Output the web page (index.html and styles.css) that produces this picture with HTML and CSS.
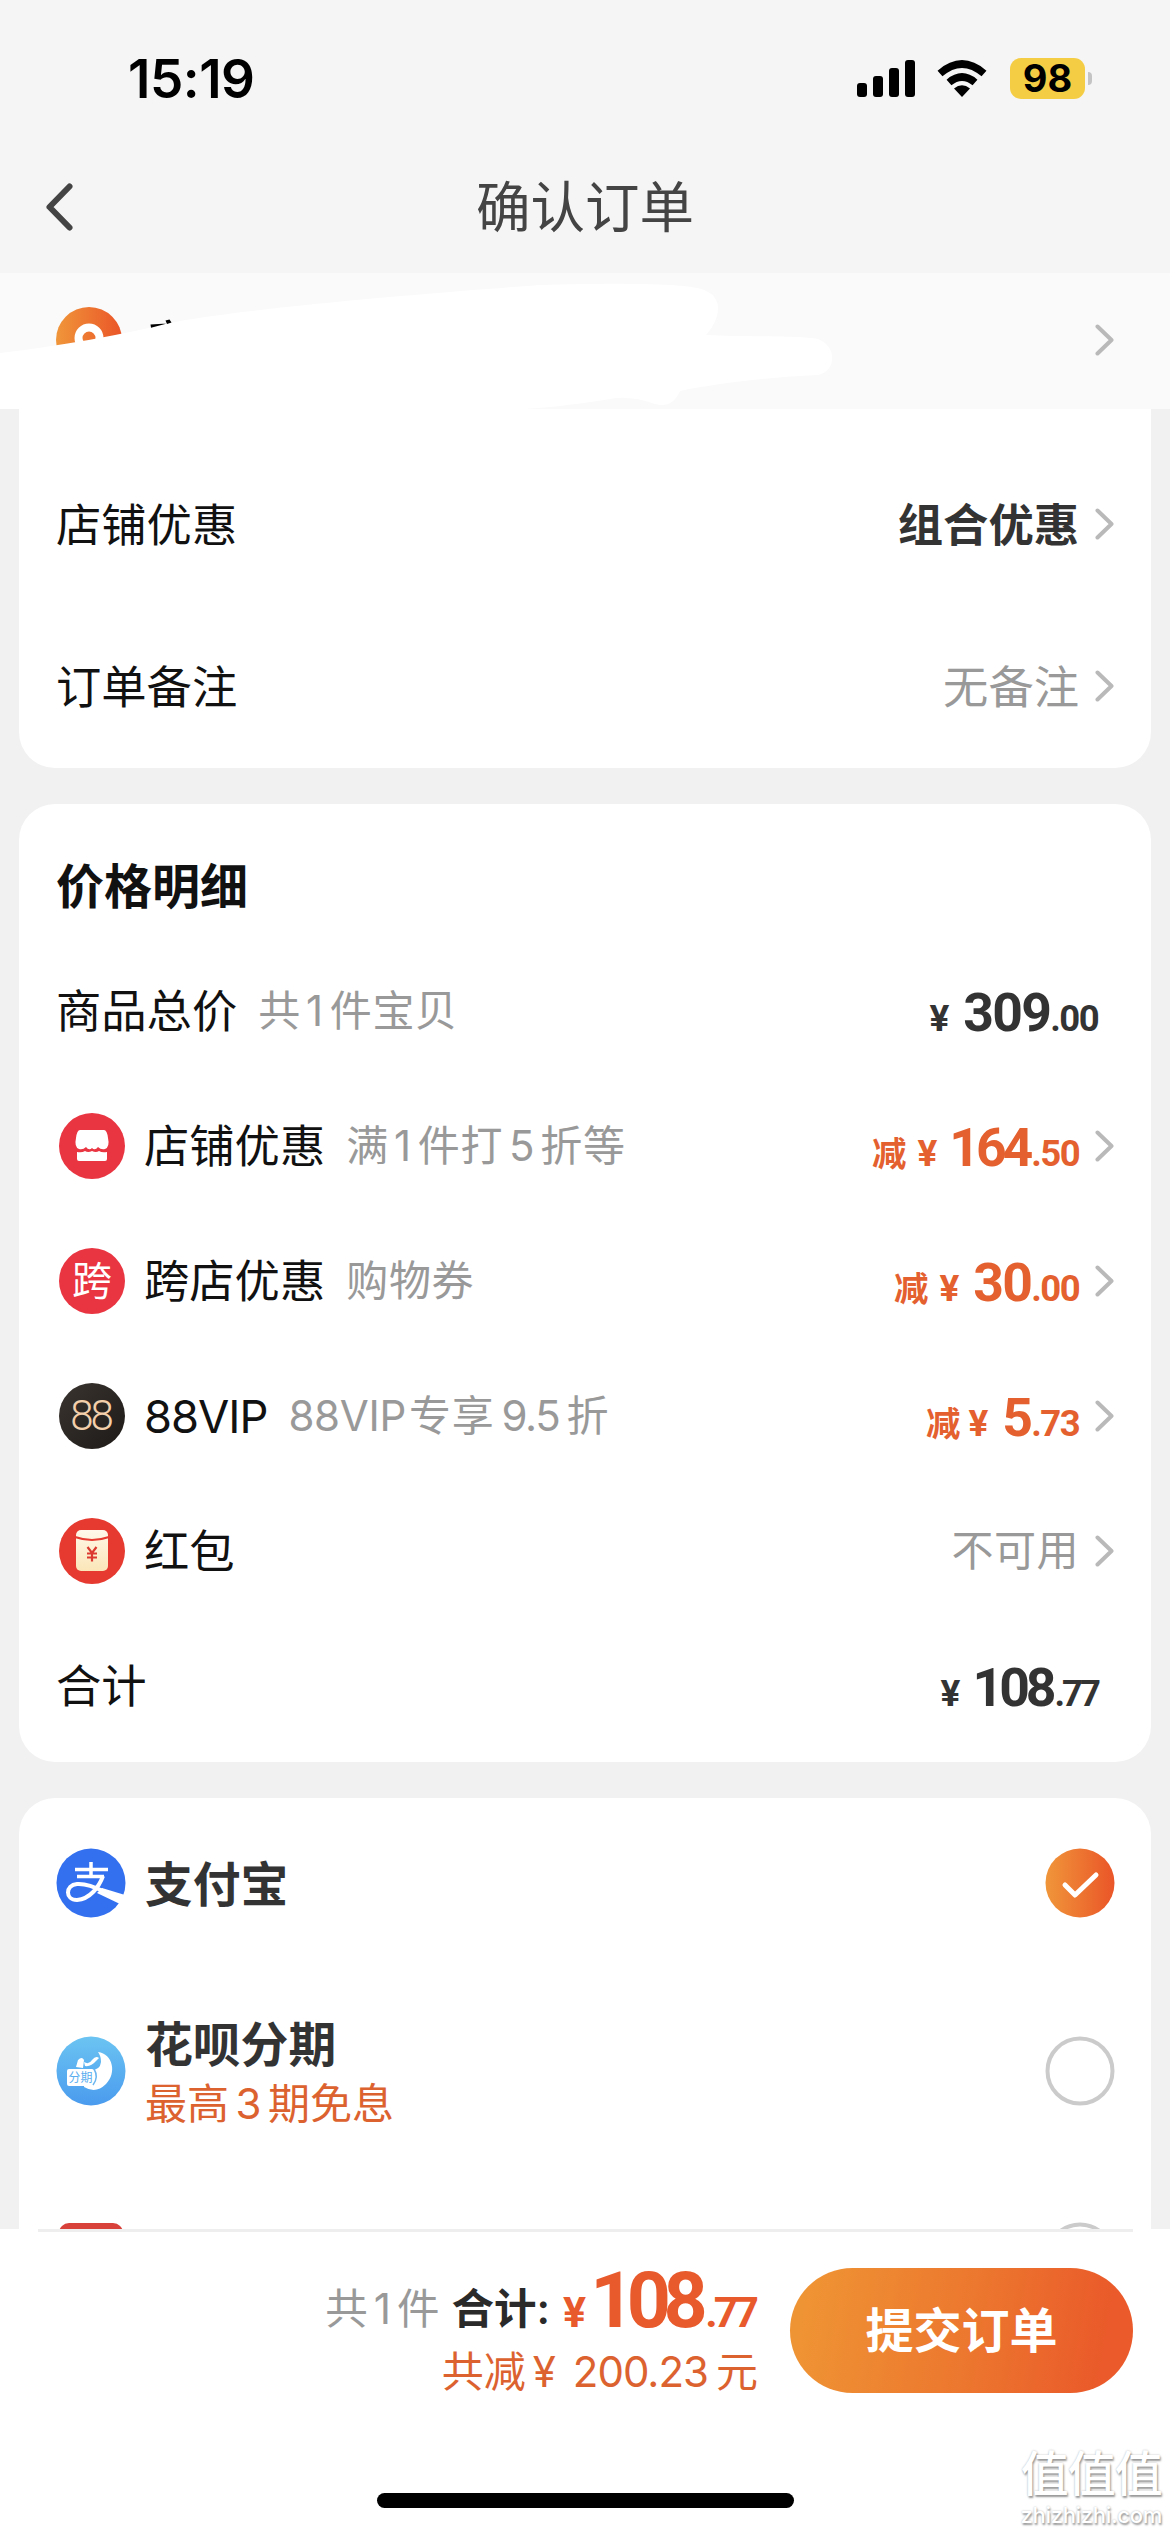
FILE: index.html
```html
<!DOCTYPE html>
<html lang="zh-CN">
<head>
<meta charset="utf-8">
<title>确认订单</title>
<link rel="stylesheet" href="styles.css">
</head>
<body>
<svg class="defs" aria-hidden="true">
  <symbol id="chev" viewBox="0 0 20 32"><path d="M2.500 2.500 16.500 16 2.500 29.500" fill="none" stroke="#b9b9b9" stroke-width="4" stroke-linecap="round" stroke-linejoin="round"/></symbol>
</svg>
<div class="phone">
  <header class="head">
    <div class="status">
      <span class="time">15:19</span>
      <span class="status-icons">
        <svg width="58" height="38" viewBox="0 0 58 38"><rect y="23" width="10" height="14" rx="3"/><rect x="16" y="16" width="10" height="21" rx="3"/><rect x="32" y="8" width="10" height="29" rx="3"/><rect x="48" width="10" height="37" rx="3"/></svg>
        <svg class="wifi" width="50" height="38" viewBox="0 0 50 38"><path d="M3 13.500Q25-5.500 47 13.500M12 22.500Q25 11.500 38 22.500" fill="none" stroke="#000" stroke-width="7.500"/><path d="M17 28.500q8-6.500 16 0L25 37z"/></svg>
        <span class="battery">98</span><span class="nub"></span>
      </span>
    </div>
    <div class="nav">
      <svg class="back" width="30" height="50" viewBox="0 0 30 50"><path d="M24.500 4.500 4.500 25 24.500 45.500" fill="none" stroke="#444" stroke-width="6" stroke-linecap="round" stroke-linejoin="round"/></svg>
      <h1>确认订单</h1>
    </div>
  </header>

  <section class="address">
    <svg class="pin" width="66" height="66" viewBox="0 0 66 66"><defs><linearGradient id="og"><stop offset="0" stop-color="#f0963a"/><stop offset="1" stop-color="#ea5528"/></linearGradient></defs><circle cx="33" cy="33" r="33" fill="url(#og)"/><circle cx="33" cy="31" r="10.500" fill="none" stroke="#fff" stroke-width="8"/></svg>
    <svg class="chev" width="20" height="32"><use href="#chev"/></svg>
    <svg class="brush" width="850" height="136" viewBox="0 0 850 136"><path d="M0 80C60 73 120 62 180 48C260 34 430 20 540 12Q690 8 706 18C724 26 720 46 706 62C740 64 800 62 818 66C838 74 836 98 818 102C770 104 720 110 680 118Q672 136 655 131Q630 122 610 126C560 134 530 136 520 136H0Z" fill="#fff"/><path d="M150.500 51.500 167 50.500 151 54.800zM165.500 47.500l4-1 2 3-4.500 1.500z"/></svg>
  </section>

  <main class="body">
    <section class="card first">
      <div class="row"><span class="label">店铺优惠</span><span class="value strong">组合优惠</span><svg class="chev" width="20" height="32"><use href="#chev"/></svg></div>
      <div class="row"><span class="label">订单备注</span><span class="value muted">无备注</span><svg class="chev" width="20" height="32"><use href="#chev"/></svg></div>
    </section>

    <section class="card detail">
      <h2>价格明细</h2>
      <div class="row"><span class="label">商品总价</span><span class="note">共<i>1</i>件宝贝</span><span class="price"><b class="yen">¥</b><b class="int">309</b><b class="dec">.00</b></span></div>
      <div class="row">
        <svg class="ico" width="66" height="66" viewBox="0 0 66 66"><circle cx="33" cy="33" r="33" fill="#e93441"/><path d="M21 17h24q3 0 4 8 2 9-3 11-4 1-7-2-3 4-6 1-3 3-6-1-3 3-7 2-5-2-3-11 1-8 4-8zM18 39q5 1 8-1 3 2 7 0 4 2 7 0 3 2 8 1v7q0 2-2 2H20q-2 0-2-2z" fill="#fff"/></svg>
        <span class="label">店铺优惠</span><span class="note">满<i>1</i>件打<i class="wide">5</i>折等</span><span class="price hot"><b class="cut">减</b><b class="yen">¥</b><b class="int lead1">164</b><b class="dec">.50</b></span><svg class="chev" width="20" height="32"><use href="#chev"/></svg></div>
      <div class="row"><span class="ico badge red">跨</span><span class="label">跨店优惠</span><span class="note">购物券</span><span class="price hot"><b class="cut">减</b><b class="yen">¥</b><b class="int">30</b><b class="dec">.00</b></span><svg class="chev" width="20" height="32"><use href="#chev"/></svg></div>
      <div class="row"><span class="ico badge black">88</span><span class="label vip">88VIP</span><span class="note"><span class="latin">88VIP</span>专享<i class="mid">9.5</i>折</span><span class="price hot"><b class="cut near">减</b><b class="yen">¥</b><b class="int">5</b><b class="dec">.73</b></span><svg class="chev" width="20" height="32"><use href="#chev"/></svg></div>
      <div class="row">
        <svg class="ico" width="66" height="66" viewBox="0 0 66 66"><defs><linearGradient id="cream" x2="0" y2="1"><stop offset="0" stop-color="#fff8ea"/><stop offset="1" stop-color="#fbe6b8"/></linearGradient></defs><circle cx="33" cy="33" r="33" fill="#e6392f"/><rect x="17" y="12" width="32" height="41" rx="5" fill="url(#cream)"/><path d="M16 19q17 6 34 0" fill="none" stroke="#e6392f" stroke-width="2.200"/><path d="M28.500 29 33 35l4.500-6M33 35v8.500M28 35.500h10M28 39.500h10" fill="none" stroke="#dc3a30" stroke-width="2.200"/></svg>
        <span class="label">红包</span><span class="value muted small">不可用</span><svg class="chev" width="20" height="32"><use href="#chev"/></svg></div>
      <div class="row"><span class="label">合计</span><span class="price"><b class="yen">¥</b><b class="int lead1">108</b><b class="dec sevens">.77</b></span></div>
    </section>

    <section class="card pay">
      <div class="method m1">
        <svg class="logo" width="70" height="70" viewBox="0 0 70 70"><circle cx="35" cy="35" r="34.500" fill="#3370f0"/><path d="M35 14v13M19 21.500h33M21 28.500h27" fill="none" stroke="#fff" stroke-width="3.500"/><path d="M47 28C43 39 34 51 21 52C9 52 9 37 21 36C34 35 47 44 67 51" fill="none" stroke="#fff" stroke-width="4"/><path d="M46 40 69 47 64 56 41 45z" fill="#fff"/></svg>
        <span class="name">支付宝</span>
        <svg class="radio" width="70" height="70" viewBox="0 0 70 70"><circle cx="35" cy="35" r="34.500" fill="url(#og)"/><path d="M20 37 30 47 51 27" fill="none" stroke="#fff" stroke-width="5" stroke-linecap="round" stroke-linejoin="round"/></svg>
      </div>
      <div class="method m2">
        <svg class="logo" width="70" height="70" viewBox="0 0 70 70"><defs><linearGradient id="sky" x2="0" y2="1"><stop offset="0" stop-color="#6bc4f2"/><stop offset="1" stop-color="#4a9bee"/></linearGradient></defs><circle cx="35" cy="35" r="34.500" fill="url(#sky)"/><path d="M42 16C57 18 61 37 50 48Q40 58 28 51L30 34Q44 36 45 26Q45 20 42 16ZM20 31l2-7q4-4 6 0l-1 8zM28 26q5 3 8-2 4-5 7-2l-3 3q-5 6-11 5z" fill="#fff"/><rect x="11" y="33" width="27" height="17" rx="2" fill="#fff"/><path d="M38 33q5 8-1 16" fill="none" stroke="#6ab5f0" stroke-width="1.500"/><text x="12.500" y="46" font-size="12" class="mini">分期</text></svg>
        <span class="name">花呗分期<small>最高<i>3</i>期免息</small></span>
        <svg class="radio" width="70" height="70" viewBox="0 0 70 70"><circle cx="35" cy="35" r="32.500" fill="#fff" stroke="#cbcbcb" stroke-width="4"/></svg>
      </div>
      <div class="method m3">
        <svg class="logo" width="70" height="70" viewBox="0 0 70 70"><rect x="3" y="1" width="64" height="64" rx="10" fill="#d8403a"/></svg>
        <svg class="radio" width="70" height="70" viewBox="0 0 70 70"><circle cx="35" cy="35" r="32.500" fill="#fff" stroke="#cbcbcb" stroke-width="4"/></svg>
      </div>
    </section>
  </main>

  <footer class="foot">
    <div class="bar">
      <div class="sums">
        <div class="total"><span class="count">共<i>1</i>件</span><span class="sum">合计:</span><b class="yen">¥</b><b class="int">108</b><b class="dec">.77</b></div>
        <div class="saved">共减<span class="y">¥</span><span class="num">200.23</span>元</div>
      </div>
      <button class="submit">提交订单</button>
    </div>
    <div class="home"></div>
    <div class="mark"><span class="mark-cn">值值值</span><span class="mark-en">zhizhizhi.com</span></div>
  </footer>
</div>
</body>
</html>
```
FILE: styles.css
```css
* { box-sizing: border-box; }
body { margin: 0; background: #f1f1f1; font-family: Inter, "Noto Sans CJK SC", sans-serif; color: #111; }
i { font-style: normal; }
h1, h2 { margin: 0; }
svg { display: block; flex: none; }
.defs { display: none; }
.phone { width: 1170px; height: 2532px; display: flex; flex-direction: column; overflow: hidden; }

.head { height: 273px; flex: none; background: #f5f5f5; }
.status { height: 157px; padding: 0 78px 0 128px; display: flex; justify-content: space-between; align-items: center; }
.time { font-size: 53px; font-weight: 600; letter-spacing: -0.5px; color: #000; }
.status-icons { display: flex; align-items: center; }
.wifi { margin: 0 23px 0 22px; }
.battery { width: 75px; height: 41px; border-radius: 11px; background: #f5cd45; color: #000; font-size: 38px; font-weight: 700; line-height: 41px; text-align: center; }
.nub { width: 4px; height: 13px; margin-left: 3px; border-radius: 0 5px 5px 0; background: #c4c4c4; }
.nav { height: 100px; padding: 0 45px; display: grid; grid-template-columns: 30px 1fr 30px; align-items: center; }
h1 { font-size: 54.5px; font-weight: 400; color: #444; text-align: center; line-height: 100px; }

.address { position: relative; height: 136px; flex: none; padding: 34px 55px 0 56px; display: flex; justify-content: space-between; align-items: flex-start; background: #fafafa; }
.address .chev { margin-top: 17px; }
.brush { position: absolute; left: 0; top: 0; }

.body { height: 1820px; flex: none; overflow: hidden; padding: 0 19px; display: flex; flex-direction: column; gap: 36px; }
.card { background: #fff; border-radius: 36px; flex: none; padding: 0 36px 0 38px; }
.first { height: 359px; border-radius: 0 0 36px 36px; padding-top: 34px; }
.row { height: 135px; display: flex; align-items: center; }
.first .row { height: 162px; }
.label { font-size: 45.3px; line-height: 60px; padding-top: 3px; margin-left: -1px; }
.value { margin-left: auto; font-size: 45.3px; line-height: 60px; padding-top: 3px; }
.strong { font-weight: 700; color: #333; }
.muted { color: #999; }
.value.small { font-size: 42px; letter-spacing: .5px; padding-top: 0; }
.chev { margin-left: 16px; }

.detail { height: 958px; padding-top: 51px; }
h2 { font-size: 48px; line-height: 64px; font-weight: 700; margin: 0 0 24px -1px; }
.ico { width: 66px; height: 66px; margin: 0 20px 0 2px; flex: none; }
.badge { border-radius: 50%; display: flex; align-items: center; justify-content: center; }
.red { background: #e93441; color: #fff; font-size: 40px; line-height: 60px; }
.black { background: linear-gradient(135deg, #3a342f, #1d1a18); color: #f3cfab; font-size: 42px; letter-spacing: -3px; font-family: Roboto, sans-serif; font-weight: 300; padding-right: 3px; }
.note { margin-left: 21px; font-size: 42px; line-height: 60px; color: #999; letter-spacing: .7px; }
.note i { margin: 0 6px 0 5px; }
.note .wide { margin: 0 5px 0 6px; }
.note .mid { margin: 0 7px 0 7px; letter-spacing: -1.3px; }
.note .latin { margin-right: 3px; letter-spacing: -.3px; }
.vip { letter-spacing: -1px; }
.price { margin-left: auto; padding: 10px 17px 0 0; display: flex; align-items: baseline; font-family: Roboto, "Noto Sans CJK SC", sans-serif; color: #333; line-height: 60px; }
.price .yen { font-size: 37px; margin-right: 14px; }
.price .int { font-size: 53.5px; letter-spacing: -1.7px; }
.price .lead1 { letter-spacing: -4px; margin: 0 2px 0 -2px; }
.price .dec { font-size: 36.5px; letter-spacing: -1.6px; margin-left: 0; }
.price .sevens { letter-spacing: -3px; }
.hot { color: #e4602e; padding-right: 0; }
.price .cut { font-size: 34.5px; font-weight: 700; margin-right: 11px; }
.price .near { margin-right: 8px; }

.pay { height: 600px; }
.method { display: flex; align-items: center; height: 187px; }
.m1 { height: 170px; }
.logo { margin: 0 19px 0 -1px; }
.name { font-size: 47.8px; line-height: 62px; font-weight: 700; color: #333; padding-top: 4px; }
.name small { display: block; font-size: 42px; font-weight: 400; line-height: 56px; color: #dc6230; }
.name small i { margin: 0 6.5px; }
.radio { margin-left: auto; }
.m2 { height: 205px; }
.m3 { height: 168px; }

.foot { position: relative; flex: 1; background: #fff; }
.bar { margin: 0 37px 0 38px; border-top: 3px solid #eee; padding-top: 36px; display: flex; justify-content: flex-end; gap: 32px; }
.sums { display: flex; flex-direction: column; align-items: flex-end; }
.total { display: flex; align-items: baseline; height: 76px; line-height: 76px; font-size: 42.5px; margin: -5px 0 5px; }
.count, .sum { position: relative; top: -3px; }
.count { color: #999; }
.count i { margin: 0 6px; }
.sum { font-weight: 600; color: #2a2a2a; margin: 0 13px 0 12px; }
.total b { color: #e8592c; font-family: Roboto, sans-serif; }
.total .yen { font-size: 43px; margin-right: 6px; }
.total .int { font-size: 77px; letter-spacing: -7.5px; margin-left: -2px; }
.total .dec { font-size: 43px; letter-spacing: -4px; margin: 0 3px 0 5px; }
.saved { font-size: 42px; line-height: 56px; color: #dc6230; }
.saved .y { margin-left: 7px; }
.saved .num { margin: 0 8px 0 17px; letter-spacing: -1px; }
.submit { width: 343px; height: 125px; border: 0; border-radius: 63px; background: linear-gradient(100deg, #ef9434 5%, #ec752e 55%, #ea5a2a 90%); color: #fff; font: 600 48px/125px Inter, "Noto Sans CJK SC", sans-serif; padding: 0; }
.home { position: absolute; left: 377px; top: 264px; width: 417px; height: 15px; border-radius: 8px; background: #000; }
.mark { position: absolute; right: 8px; top: 216px; display: flex; flex-direction: column; align-items: center; color: #fff; text-shadow: 1px 2px 2px #999, 0 0 2px #bbb; }
.mark-cn { font-size: 48px; line-height: 58px; font-weight: 500; letter-spacing: -1px; }
.mark-en { font-size: 22px; line-height: 24px; font-weight: 500; letter-spacing: -.3px; }
.mini { fill: #5aaef0; font-family: "Noto Sans CJK SC", sans-serif; }
```
